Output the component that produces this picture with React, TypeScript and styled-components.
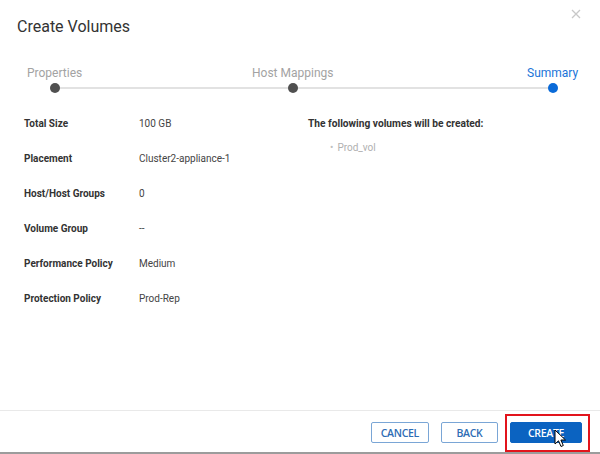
import styled, { createGlobalStyle } from "styled-components";

const GlobalStyle = createGlobalStyle`
  html, body {
    margin: 0;
    padding: 0;
    background: #fff;
  }
  body {
    font-family: Roboto, "Liberation Sans", Arial, sans-serif;
  }
`;

type Step = { label: string; active?: boolean };

const steps: Step[] = [
  { label: "Properties" },
  { label: "Host Mappings" },
  { label: "Summary", active: true },
];

const details = [
  { label: "Total Size", value: "100 GB" },
  { label: "Placement", value: "Cluster2-appliance-1" },
  { label: "Host/Host Groups", value: "0" },
  { label: "Volume Group", value: "--" },
  { label: "Performance Policy", value: "Medium" },
  { label: "Protection Policy", value: "Prod-Rep" },
];

const App = () => {
  return (
    <>
      <GlobalStyle />
      <Dialog>
        <Header>
          <Title>Create Volumes</Title>
          <CloseButton aria-label="close">
            <svg width="10" height="10" viewBox="0 0 10 10">
              <path d="M1 1 L9 9 M9 1 L1 9" stroke="#c8c8c8" strokeWidth="1.3" />
            </svg>
          </CloseButton>
        </Header>

        <Stepper>
          {steps.map((s) => (
            <StepItem key={s.label}>
              <StepLabel active={s.active}>{s.label}</StepLabel>
              <StepDot active={s.active} />
            </StepItem>
          ))}
        </Stepper>

        <Body>
          <DetailList>
            {details.map((d) => (
              <DetailRow key={d.label}>
                <DetailLabel>{d.label}</DetailLabel>
                <DetailValue>{d.value}</DetailValue>
              </DetailRow>
            ))}
          </DetailList>
          <Summary>
            <SummaryTitle>The following volumes will be created:</SummaryTitle>
            <VolumeList>
              <li>Prod_vol</li>
            </VolumeList>
          </Summary>
        </Body>

        <Footer>
          <Button>CANCEL</Button>
          <Button>BACK</Button>
          <CreateWrap>
            <Button primary>CREATE</Button>
            <Highlight />
            <Cursor width="13" height="19" viewBox="0 0 13 19">
              <path
                d="M1 1 L1 15 L4.5 11.8 L7 17.5 L9.3 16.5 L6.9 11 L11.5 11 Z"
                fill="#fff"
                stroke="#000"
                strokeWidth="1"
                strokeLinejoin="round"
              />
            </Cursor>
          </CreateWrap>
        </Footer>
      </Dialog>
    </>
  );
};

const Dialog = styled.div`
  width: 600px;
  height: 454px;
  display: flex;
  flex-direction: column;
  background: #fff;
  border-bottom: 2px solid #9c9c9c;
  box-sizing: border-box;
  overflow: hidden;
`;

const Header = styled.div`
  display: flex;
  align-items: flex-start;
  justify-content: space-between;
  padding: 17px 19px 0 17px;
  height: 48px;
  box-sizing: border-box;
`;

const Title = styled.h1`
  margin: 0;
  font-size: 16px;
  font-weight: 400;
  color: #333;
  line-height: 20px;
`;

const CloseButton = styled.button`
  border: none;
  background: none;
  padding: 0;
  margin-top: -8px;
  width: 10px;
  height: 10px;
  display: flex;
  cursor: pointer;
`;

const Stepper = styled.div`
  position: relative;
  display: grid;
  grid-template-columns: 225px 275px auto;
  padding: 18px 0 0 27px;

  &::before {
    content: "";
    position: absolute;
    left: 54px;
    right: 47px;
    top: 39px;
    height: 2px;
    background: #e2e2e2;
  }
`;

const StepItem = styled.div`
  display: flex;
  flex-direction: column;
  align-items: center;
  gap: 3px;
  position: relative;
  width: max-content;
`;

const StepLabel = styled.span<{ active?: boolean }>`
  font-size: 12px;
  line-height: 14px;
  color: ${({ active }) => (active ? "#1a74d8" : "#a3a3a3")};
`;

const StepDot = styled.span<{ active?: boolean }>`
  width: 10px;
  height: 10px;
  border-radius: 50%;
  background: ${({ active }) => (active ? "#0a6ad8" : "#505050")};
`;

const Body = styled.div`
  flex: 1;
  display: flex;
  padding: 24px 0 0 24px;
`;

const DetailList = styled.div`
  width: 284px;
  display: flex;
  flex-direction: column;
`;

const DetailRow = styled.div`
  display: grid;
  grid-template-columns: 115px 1fr;
  height: 35px;
  align-items: start;
  line-height: 13px;
`;

const DetailLabel = styled.span`
  font-size: 10px;
  font-weight: 700;
  color: #333;
`;

const DetailValue = styled.span`
  font-size: 10px;
  color: #444;
`;

const Summary = styled.div`
  display: flex;
  flex-direction: column;
`;

const SummaryTitle = styled.span`
  font-size: 10.2px;
  font-weight: 700;
  color: #333;
  line-height: 13px;
`;

const VolumeList = styled.ul`
  margin: 12px 0 0;
  padding: 0 0 0 22px;
  list-style: none;

  li {
    font-size: 10px;
    color: #b0b0b0;
    line-height: 12px;
  }

  li::before {
    content: "•";
    margin-right: 4px;
    color: #c0c0c0;
  }
`;

const Footer = styled.div`
  height: 42px;
  border-top: 1px solid #e9e9e9;
  display: flex;
  justify-content: flex-end;
  align-items: flex-start;
  gap: 12px;
  padding: 11px 18px 0 0;
  box-sizing: border-box;
`;

const Button = styled.button<{ primary?: boolean }>`
  height: 21px;
  min-width: ${({ primary }) => (primary ? "72px" : "57px")};
  padding: 0 9px;
  border-radius: 2px;
  font-family: "Open Sans", Roboto, sans-serif;
  font-size: 10.5px;
  font-weight: 600;
  letter-spacing: -0.3px;
  border: 1px solid ${({ primary }) => (primary ? "#0b63c1" : "#7aa6d6")};
  background: ${({ primary }) => (primary ? "#0b63c1" : "#fff")};
  color: ${({ primary }) => (primary ? "#fff" : "#2d6cb4")};
  cursor: pointer;
`;

const CreateWrap = styled.div`
  position: relative;
  display: flex;
`;

const Highlight = styled.div`
  position: absolute;
  left: -5px;
  right: -8px;
  top: -8px;
  bottom: -9px;
  border: 2px solid #e2141c;
  pointer-events: none;
`;

const Cursor = styled.svg`
  position: absolute;
  left: 44px;
  top: 7px;
  pointer-events: none;
`;

export default App;
